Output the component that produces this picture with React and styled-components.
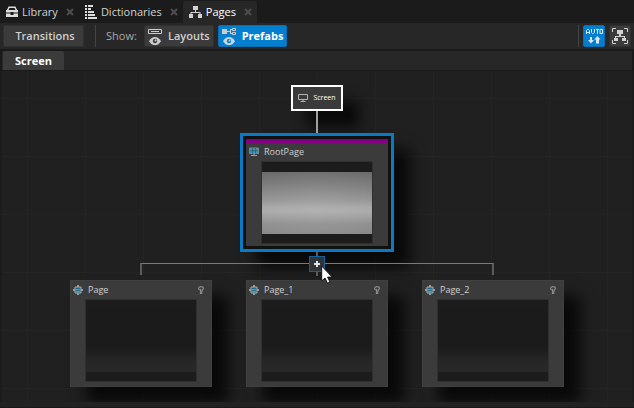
import React from 'react';
import styled, { createGlobalStyle, css } from 'styled-components';

const GlobalStyle = createGlobalStyle`
  * { box-sizing: border-box; }
  body { margin: 0; background: #1c1c1c; }
  button { font: inherit; color: inherit; border: 0; padding: 0; background: none; }
`;

const Window = styled.div`
  display: flex;
  flex-direction: column;
  min-height: 100vh;
  color: #d2d2d2;
  font: 11px/16px "Open Sans", "Noto Sans", sans-serif;
  overflow: hidden;
`;

const TabBar = styled.div`
  display: flex;
  height: 23px;
  padding: 1px 0 0;
  background: #1b1b1b;
`;

const Tab = styled.div`
  display: flex;
  align-items: center;
  gap: 4px;
  padding: 0 1px 0 6px;
  border-radius: 2px 2px 0 0;
  background: ${(p) => (p.$active ? '#272727' : 'transparent')};
  color: ${(p) => (p.$active ? '#ffffff' : '#d2d2d2')};
`;

const TabLabel = styled.button`
  display: flex;
  align-items: center;
  gap: 4px;
`;

const CloseButton = styled.button`
  display: flex;
  align-items: center;
  justify-content: center;
  width: 16px;
  height: 16px;
`;

const Toolbar = styled.div`
  display: flex;
  align-items: center;
  height: 26px;
  padding: 0 3px;
  gap: 4px;
  background: #272727;
`;

const ToolButton = styled.button`
  display: flex;
  align-items: center;
  justify-content: center;
  gap: 6px;
  height: 22px;
  padding: 0 3px;
  border: 1px solid ${(p) => (p.$on ? '#0a6fb5' : '#303030')};
  border-radius: 2px;
  background: ${(p) => (p.$on ? '#047fd0' : '#3b3b3b')};
  color: ${(p) => (p.$on ? '#ffffff' : '#cfcfcf')};
  font-weight: ${(p) => (p.$on ? 700 : 600)};
  ${(p) => p.$wide && css`width: 81px; padding: 0 3px 0 6px;`}
  ${(p) => p.$icon && css`width: 22px; padding: 0;`}
`;

const Divider = styled.span`
  width: 1px;
  height: 22px;
  margin: ${(p) => (p.$tight ? '0' : '0 6px 0 7px')};
  background: #444444;
`;

const Spacer = styled.span`
  flex: 1;
`;

const ToolLabel = styled.span`
  min-width: 34px;
  color: #a8a8a8;
`;

const ScreenTabs = styled.div`
  display: flex;
  height: 22px;
  padding: 0 1px;
  border: 2px solid #1a1a1a;
  border-bottom-width: 1px;
  background: #272727;
`;

const ScreenTab = styled.button`
  width: 61px;
  border-radius: 2px 2px 0 0;
  background: #3b3b3b;
  color: #ffffff;
  font-weight: 700;
`;

const Canvas = styled.main`
  flex: 1;
  display: flex;
  flex-direction: column;
  align-items: center;
  margin: 0 2px;
  padding: 14px 0;
  overflow: hidden;
  background-color: #202020;
  background-image:
    linear-gradient(#242424 1px, transparent 1px),
    linear-gradient(90deg, #242424 1px, transparent 1px);
  background-size: 58px 58px;
  background-position: 25px 27px;
`;

const StatusEdge = styled.footer`
  height: 6px;
  border-bottom: 1px solid #181818;
  background: #222222;
`;

const shadow = '16px 16px 14px rgba(0, 0, 0, 0.75)';

const ScreenNode = styled.div`
  display: flex;
  align-items: center;
  justify-content: center;
  gap: 5px;
  width: 52px;
  height: 26px;
  border: 2px solid #ffffff;
  background: #3a3a3a;
  box-shadow: ${shadow};
  color: #ffffff;
  font-size: 7px;
  font-weight: 500;
`;

const Link = styled.span`
  width: 2px;
  height: ${(p) => p.$length}px;
  background: ${(p) => p.$color || '#5c5c5c'};
`;

const Selection = styled.div`
  padding: 3px;
  border: 3px solid #087bc7;
  background: #111111;
  box-shadow: ${shadow};
`;

const Node = styled.article`
  width: 142px;
  height: 107px;
  padding: 0 15px;
  background: #3b3b3b;
  ${(p) => (p.$root
    ? css`border-top: 4px solid #810081;`
    : css`border: 1px solid #404040; padding: 0 14px; box-shadow: ${shadow};`)}
`;

const NodeHeader = styled.header`
  display: flex;
  align-items: center;
  gap: 5px;
  height: 18px;
  margin: 0 -7px 0 -12px;
  font-size: 9px;
`;

const NodeName = styled.span`
  flex: 1;
`;

const Preview = styled.div`
  height: 83px;
  padding: 10px 0;
  border: 1px solid #303030;
  background: #1c1c1c;
`;

const PreviewImage = styled.div`
  height: 62px;
  background: ${(p) => (p.$lit
    ? 'radial-gradient(ellipse 75% 100% at 50% 50%, rgba(255,255,255,0.1), rgba(255,255,255,0) 100%), linear-gradient(#686868, #7e7e7e 25%, #949494 46%, #a6a6a6 57%, #a9a9a9 63%, #9e9e9e 72%, #8e8e8e 84%, #888888)'
    : 'linear-gradient(#1b1b1b 60%, #262626 82%, #282828)')};
`;

const Junction = styled.div`
  position: relative;
  display: flex;
  flex-direction: column;
  align-items: center;
  width: 354px;
  height: 24px;
`;

const Bracket = styled.span`
  position: absolute;
  inset: 11px 0 1px;
  border: solid #5c5c5c;
  border-width: 1px 2px 0;
  border-top-color: #7a7a7a;
`;

const AddButton = styled.button`
  position: relative;
  display: flex;
  align-items: center;
  justify-content: center;
  width: 16px;
  height: 16px;
  border: 1px solid #17619a;
  background: #2f3438;
`;

const Pointer = styled.svg`
  position: absolute;
  left: 181px;
  top: 13px;
`;

const Children = styled.div`
  display: flex;
  gap: 34px;
  margin-top: 4px;
`;

const LibraryIcon = () => (
  <svg width="12" height="12" viewBox="0 0 12 12" fill="none" stroke="#dddddd" aria-hidden="true">
    <path d="M1.500 4.500L3 1.200h6l1.500 3.300" strokeWidth="1.500" />
    <path d="M0 4h12v2.500H7.500V6h-3v.5H0zM0 7.500h4.500V9h3V7.500H12V11H0z" fill="#dddddd" stroke="none" />
  </svg>
);

const DictionaryIcon = () => (
  <svg width="12" height="14" viewBox="0 0 12 14" fill="#dddddd" aria-hidden="true">
    <path d="M0 0h2v2H0zM0 3h2v2H0zM0 6h2v2H0zM0 9h2v2H0zM0 12h2v2H0zM3 0h5v2H3zM3 3h3v2H3zM3 6h6v2H3zM3 9h7v2H3zM3 12h9v2H3z" />
  </svg>
);

const TreeIcon = () => (
  <svg width="13" height="12" viewBox="0 0 13 12" fill="#d2d2d2" aria-hidden="true">
    <path d="M4 0h5v4H7v2h4.500v2H13v4H9V8h1.500V7h-8v1H4v4H0V8h1.500V6H6V4H4z" />
  </svg>
);

const CloseIcon = () => (
  <svg width="8" height="8" viewBox="0 0 8 8" stroke="#4e4e4e" strokeWidth="2" aria-hidden="true">
    <path d="M1 1l6 6M7 1L1 7" />
  </svg>
);

const eye = 'M0 13.500Q3 9 7 9T14 13.500Q11 18 7 18T0 13.500z';

const LayoutsIcon = () => (
  <svg width="14" height="17" viewBox="0 0 14 17" aria-hidden="true">
    <path d="M.5 1.500h13v4H.5zM3 3.500h8" fill="none" stroke="#cccccc" />
    <path transform="translate(1 1) scale(.86 .9)" d={eye} fill="#cccccc" />
    <circle cx="7" cy="13" r="2.200" fill="#3b3b3b" />
    <circle cx="7.500" cy="12.500" r="1" fill="#cccccc" />
  </svg>
);

const PrefabsIcon = () => (
  <svg width="14" height="17" viewBox="0 0 14 17" aria-hidden="true">
    <path d="M0 1h5v5H0z" fill="#cccccc" />
    <path d="M5 3.500h3M8.500 1.500v4M8 1.500h2M8 5.500h2M10.500 .5h3v2h-3zM10.500 4.500h3v2h-3z" fill="none" stroke="#cccccc" />
    <path transform="translate(1 1) scale(.86 .9)" d={eye} fill="#c6d6e0" />
    <circle cx="7" cy="13" r="2.200" fill="#047fd0" />
    <circle cx="7.500" cy="12.500" r="1" fill="#cccccc" />
  </svg>
);

const AutoIcon = () => (
  <svg width="17" height="15" viewBox="0 0 17 15" fill="none" stroke="#d8e6ef" aria-hidden="true">
    <path d="M.5 5V1.500l1-1h1l1 1V5M.5 3.500h3M5.500 0v3.500l1 1h1l1-1V0M10 .5h3M11.500 .5V5M14 .5h2.500v4H14z" />
    <path d="M4 8h2v3h2l-3 3.500L2 11h2zM10 14.500v-4H8L11.500 7l3 3.500H13v4z" fill="#d8e6ef" stroke="none" />
  </svg>
);

const FitIcon = () => (
  <svg width="16" height="16" viewBox="0 0 16 16" fill="none" stroke="#d2d2d2" aria-hidden="true">
    <path d="M.5 4V.5H4M12 .5h3.500V4M15.500 12v3.500H12M4 15.500H.5V12" />
    <path d="M5 2h6v4H9v2h4v2h1v3h-4v-3h2V9H4v1h2v3H2v-3h1V8h4V6H5z" fill="#d2d2d2" stroke="none" />
  </svg>
);

const MonitorIcon = () => (
  <svg width="10" height="10" viewBox="0 0 10 10" aria-hidden="true">
    <path d="M.5 1.500h9v5h-9zM5 6.500v2M2.500 8.500h5" fill="none" stroke="#b4b4b4" />
  </svg>
);

const RootIcon = () => (
  <svg width="10" height="10" viewBox="0 0 10 10" aria-hidden="true">
    <path d="M.5 1h9v5.500h-9z" fill="#2d9bc4" stroke="#7b878c" />
    <path d="M1 3.700h8M3.500 1v5.500M6.500 1v5.500" stroke="#3c525c" strokeWidth=".7" />
    <path d="M5 6.500v2M2 8.500h6" stroke="#a0a0a0" />
  </svg>
);

const PageIcon = () => (
  <svg width="10" height="10" viewBox="0 0 10 10" aria-hidden="true">
    <path d="M5 0v10M0 5h10" stroke="#9a9a9a" strokeWidth="2" />
    <path d="M2 2h6v6H2z" fill="#246a86" stroke="#a4a8aa" />
    <path d="M3 4.500h4M3 6.500h4" stroke="#35a8d3" />
  </svg>
);

const HintIcon = () => (
  <svg width="6" height="8" viewBox="0 0 6 8" fill="none" stroke="#8c8c8c" aria-hidden="true">
    <path d="M1.500 4C.7 3.400.6 2.700.7 2.200 1 1.200 1.900.7 3 .7s2.300.6 2.300 1.700c0 1-.8 1.300-1.200 2.100L3.500 7.500H2.500V3" strokeWidth="1.200" />
  </svg>
);

const tabs = [
  { name: 'Library', Icon: LibraryIcon },
  { name: 'Dictionaries', Icon: DictionaryIcon },
  { name: 'Pages', Icon: TreeIcon, active: true },
];

const pages = ['Page', 'Page_1', 'Page_2'];

export default function App() {
  return (
    <Window>
      <GlobalStyle />
      <TabBar>
        {tabs.map(({ name, Icon, active }) => (
          <Tab key={name} $active={active}>
            <TabLabel><Icon />{name}</TabLabel>
            <CloseButton aria-label={`Close ${name}`}><CloseIcon /></CloseButton>
          </Tab>
        ))}
      </TabBar>
      <Toolbar>
        <ToolButton $wide>Transitions</ToolButton>
        <Divider />
        <ToolLabel>Show:</ToolLabel>
        <ToolButton><LayoutsIcon />Layouts</ToolButton>
        <ToolButton $on aria-pressed="true"><PrefabsIcon />Prefabs</ToolButton>
        <Spacer />
        <Divider $tight />
        <ToolButton $on $icon aria-label="Auto layout"><AutoIcon /></ToolButton>
        <ToolButton $icon aria-label="Fit to view"><FitIcon /></ToolButton>
      </Toolbar>
      <ScreenTabs>
        <ScreenTab>Screen</ScreenTab>
      </ScreenTabs>
      <Canvas>
        <ScreenNode><MonitorIcon />Screen</ScreenNode>
        <Link $length={22} $color="#a0a0a0" />
        <Selection>
          <Node $root>
            <NodeHeader><RootIcon /><NodeName>RootPage</NodeName></NodeHeader>
            <Preview><PreviewImage $lit /></Preview>
          </Node>
        </Selection>
        <Junction>
          <Bracket />
          <Link $length={4} />
          <AddButton aria-label="Add page">
            <svg width="6" height="6" viewBox="0 0 6 6" stroke="#e4e4e4" strokeWidth="2" aria-hidden="true"><path d="M3 0v6M0 3h6" /></svg>
          </AddButton>
          <Link $length={4} />
          <Pointer width="12" height="19" viewBox="0 0 12 19" aria-hidden="true">
            <path d="M.7 1v15l3.300-3 2.500 5.300 2.500-1.200-2.400-5h4.600z" fill="#ffffff" stroke="#151515" />
          </Pointer>
        </Junction>
        <Children>
          {pages.map((name) => (
            <Node key={name}>
              <NodeHeader><PageIcon /><NodeName>{name}</NodeName><HintIcon /></NodeHeader>
              <Preview><PreviewImage /></Preview>
            </Node>
          ))}
        </Children>
      </Canvas>
      <StatusEdge />
    </Window>
  );
}
